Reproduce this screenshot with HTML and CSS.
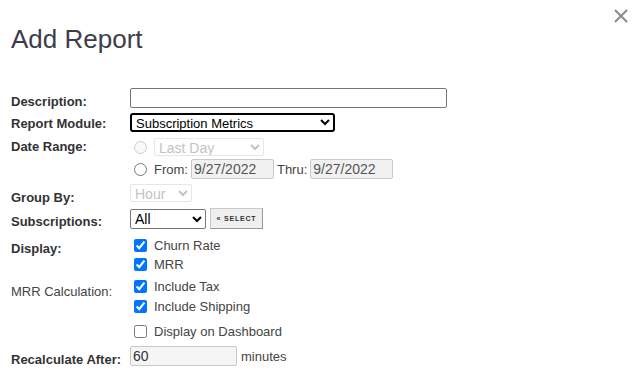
FILE: index.html
```html
<!DOCTYPE html>
<html>
<head>
<meta charset="utf-8">
<link rel="stylesheet" href="styles.css">
</head>
<body>
<div class="dialog">
  <button class="close" aria-label="Close">
    <svg width="16" height="16" viewBox="0 0 16 16"><path d="M2 2L14 14M14 2L2 14" stroke="#8a8a8a" stroke-width="2" fill="none"/></svg>
  </button>
  <h1 class="title">Add Report</h1>
  <div class="form">
    <div class="row r-desc">
      <label class="lbl">Description:</label>
      <div class="field"><input class="txt desc" type="text"></div>
    </div>
    <div class="row r-module">
      <label class="lbl">Report Module:</label>
      <div class="field"><select class="sel module"><option>Subscription Metrics</option></select></div>
    </div>
    <div class="row r-date">
      <label class="lbl">Date Range:</label>
      <div class="field stack">
        <div class="line l1">
          <input type="radio" class="radio" name="dr" disabled>
          <select class="sel lastday" disabled><option>Last Day</option></select>
        </div>
        <div class="line l2">
          <input type="radio" class="radio" name="dr">
          <span class="txtlbl">From:</span>
          <input class="txt date" type="text" value="9/27/2022" disabled>
          <span class="txtlbl thru">Thru:</span>
          <input class="txt date" type="text" value="9/27/2022" disabled>
        </div>
      </div>
    </div>
    <div class="row r-group">
      <label class="lbl">Group By:</label>
      <div class="field"><select class="sel hour" disabled><option>Hour</option></select></div>
    </div>
    <div class="row r-subs">
      <label class="lbl">Subscriptions:</label>
      <div class="field line">
        <select class="sel all"><option>All</option></select>
        <button class="btn">« SELECT</button>
      </div>
    </div>
    <div class="row r-display">
      <label class="lbl">Display:</label>
      <div class="field stack">
        <label class="chk"><input type="checkbox" checked><span>Churn Rate</span></label>
        <label class="chk"><input type="checkbox" checked><span>MRR</span></label>
      </div>
    </div>
    <div class="row r-mrr">
      <label class="lbl normal">MRR Calculation:</label>
      <div class="field stack">
        <label class="chk"><input type="checkbox" checked><span>Include Tax</span></label>
        <label class="chk"><input type="checkbox" checked><span>Include Shipping</span></label>
      </div>
    </div>
    <div class="row r-dash">
      <span class="lbl"></span>
      <div class="field">
        <label class="chk"><input type="checkbox"><span>Display on Dashboard</span></label>
      </div>
    </div>
    <div class="row r-recalc">
      <label class="lbl">Recalculate After:</label>
      <div class="field line">
        <input class="txt mins" type="text" value="60">
        <span class="txtlbl">minutes</span>
      </div>
    </div>
  </div>
</div>
</body>
</html>
```

FILE: styles.css
```css
* { box-sizing: border-box; }
html, body { margin: 0; padding: 0; background: #fff; }
body {
  font-family: "Liberation Sans", Arial, sans-serif;
  color: #333;
  width: 639px;
  height: 377px;
  overflow: hidden;
}
.dialog {
  position: relative;
  padding: 24px 0 0 11px;
}
.close {
  position: absolute;
  top: 8px;
  left: 613px;
  width: 16px;
  height: 16px;
  padding: 0;
  border: 0;
  background: none;
  display: block;
}
.close svg { display: block; }
.title {
  margin: 0 0 34px 0;
  font-size: 26px;
  font-weight: normal;
  color: #3d3d4a;
  line-height: 30px;
}
.form { display: flex; flex-direction: column; }
.row { display: flex; align-items: flex-start; }
.lbl {
  width: 119px;
  flex: none;
  font-size: 13px;
  font-weight: bold;
  color: #333;
  line-height: 15px;
}
.lbl.normal { font-weight: normal; color: #444; }
.field { display: flex; }
.stack { flex-direction: column; }
.line { display: flex; align-items: center; }

.txt, .sel, .btn {
  font-family: "Liberation Sans", Arial, sans-serif;
  font-size: 13px;
  margin: 0;
}
.txt {
  height: 20px;
  border: 1px solid #767676;
  border-radius: 2px;
  padding: 1px 2px;
  color: #000;
  font-size: 14px;
}
.txt:disabled {
  background: #f1f1f1;
  border-color: #c8c8c8;
  color: #555;
}
.sel {
  height: 19px;
  border: 1px solid #767676;
  border-radius: 2px;
  padding: 0;
  color: #000;
  background: #fff;
}
.sel:disabled { color: #aaa; border-color: #dcdcdc; background: #fff; }

.r-desc .lbl { margin-top: 6px; }
.desc { width: 317px; }

.r-module { margin-top: 4px; }
.r-module .lbl { margin-top: 3px; }
.module { width: 205px; border: 2px solid #000; border-radius: 3px; height: 19px; }

.r-date { margin-top: 6px; }
.r-date .lbl { margin-top: 1px; }
.radio { margin: 0 7px 0 4px; width: 13px; height: 13px; }
.l1 { height: 18px; }
.lastday { width: 110px; height: 18px; font-size: 14px; }
.l2 { margin-top: 3px; height: 20px; }
.txtlbl { font-size: 13px; color: #444; margin-right: 3px; }
.thru { margin-left: 3px; }
.date { width: 83px; }

.r-group { margin-top: 5px; }
.r-group .lbl { margin-top: 6px; }
.hour { width: 62px; height: 18px; font-size: 14px; }

.r-subs { margin-top: 3px; }
.r-subs .lbl { margin-top: 6px; }
.all { width: 76px; height: 20px; font-size: 14px; }
.btn {
  margin-left: 4px;
  height: 21px;
  width: 53px;
  font-size: 7px;
  letter-spacing: 0.8px;
  font-weight: bold;
  color: #333;
  background: #efefef;
  border: 1px solid #c9c9c9;
  border-bottom-color: #999;
  border-right-color: #999;
  padding: 0;
}

.chk {
  display: flex;
  align-items: center;
  height: 19px;
  font-size: 13px;
  color: #444;
}
.chk input { margin: 0 7px 0 4px; width: 13px; height: 13px; }

.r-display { margin-top: 7px; }
.r-display .lbl { margin-top: 5px; }
.r-mrr { margin-top: 3px; }
.r-mrr .lbl { margin-top: 7px; }
.r-mrr .chk + .chk { margin-top: 1px; }
.r-dash { margin-top: 6px; }
.r-recalc { margin-top: 5px; }
.r-recalc .lbl { margin-top: 6px; }
.mins { width: 107px; border-color: #c8c8c8; background: #f5f5f5; color: #333; }
.r-recalc .txtlbl { margin-left: 4px; }
```
